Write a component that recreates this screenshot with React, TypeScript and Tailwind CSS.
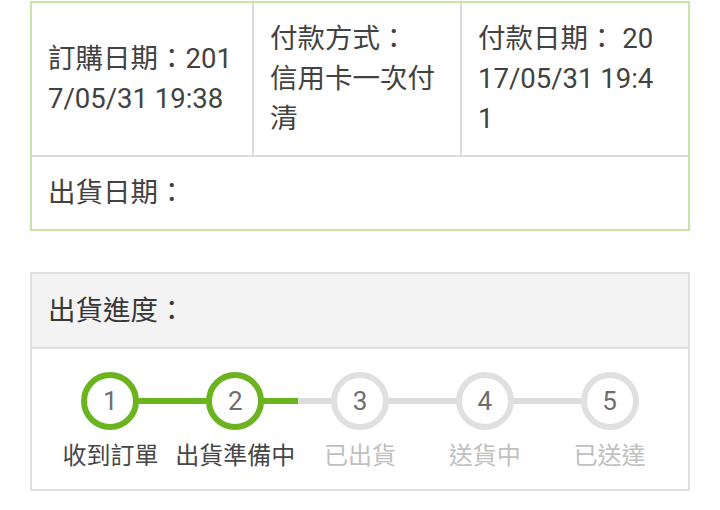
const steps = [
  { n: 1, label: '收到訂單', done: true },
  { n: 2, label: '出貨準備中', done: true },
  { n: 3, label: '已出貨', done: false },
  { n: 4, label: '送貨中', done: false },
  { n: 5, label: '已送達', done: false },
];

const Step = ({ n, label, done, first, last }: { n: number; label: string; done: boolean; first: boolean; last: boolean }) => (
  <div className="relative flex flex-1 flex-col items-center">
    {/* connector halves */}
    {!first && (
      <div className={`absolute left-0 right-1/2 top-[26px] h-[6px] ${done ? 'bg-[#6bb420]' : 'bg-[#dddddd]'}`} />
    )}
    {!last && (
      <div className={`absolute left-1/2 right-0 top-[26px] h-[6px] ${done ? 'bg-[#6bb420]' : 'bg-[#dddddd]'}`} />
    )}
    <div
      className={`relative z-10 flex h-[58px] w-[58px] items-center justify-center rounded-full border-[6px] bg-white text-[26px] text-[#6e6e6e] ${
        done ? 'border-[#6bb420]' : 'border-[#e0e0e0]'
      }`}
    >
      {n}
    </div>
    <div className={`mt-[10px] text-[24px] leading-[32px] ${done ? 'text-[#474747]' : 'text-[#c0c0c0]'}`}>{label}</div>
  </div>
);

export default function App() {
  return (
    <div className="min-h-[510px] bg-white px-[30px] pt-px font-[Roboto,'Noto_Sans_CJK_TC',sans-serif] text-[27.5px] leading-[40px] text-[#424242]">
      {/* order info */}
      <div className="border-2 border-[#c6e5a7]">
        <div className="grid grid-cols-[222px_208px_1fr]">
          <div className="flex items-center break-all border-r-2 border-[#dddddd] py-4 pl-[16px] pr-[14px]">
            訂購日期：2017/05/31 19:38
          </div>
          <div className="flex flex-col justify-center break-all border-r-2 border-[#dddddd] py-4 pl-[16px] pr-[12px]">
            <div>付款方式：</div>
            <div>信用卡一次付清</div>
          </div>
          <div className="flex items-center break-all py-4 pl-[16px] pr-[27px]">付款日期： 2017/05/31 19:41</div>
        </div>
        <div className="border-t-2 border-[#dddddd] py-4 pl-[16px]">出貨日期：</div>
      </div>

      {/* shipping progress */}
      <div className="mt-[41px] border-2 border-[#e0e0e0]">
        <div className="border-b-2 border-[#e0e0e0] bg-[#f3f3f3] py-4 pl-[16px] leading-[41px] text-[#383838]">出貨進度：</div>
        <div className="flex px-[16px] pt-[23px] pb-[17px]">
          {steps.map((s, i) => (
            <Step key={s.n} {...s} first={i === 0} last={i === steps.length - 1} />
          ))}
        </div>
      </div>
    </div>
  );
}
